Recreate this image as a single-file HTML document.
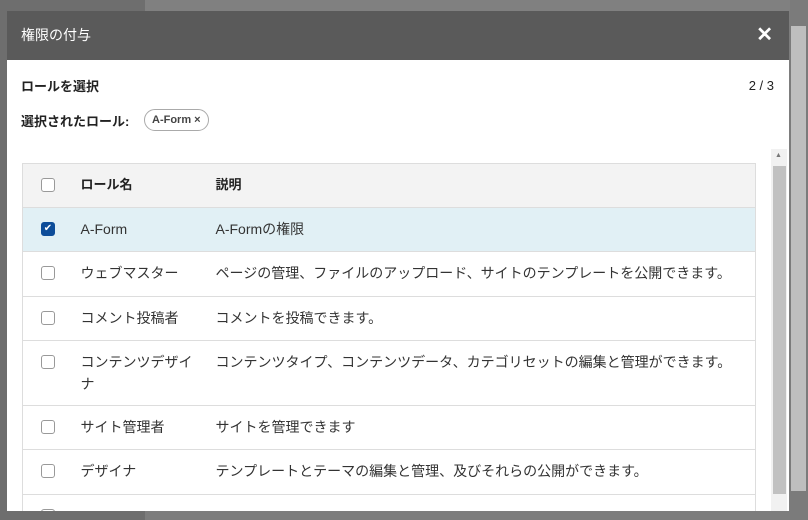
<!DOCTYPE html><html><head><style>
*{margin:0;padding:0;box-sizing:border-box}
body{width:808px;height:520px;overflow:hidden;background:#7d7d7d;font-family:"Liberation Sans","Noto Sans CJK JP",sans-serif;position:relative;color:#333}
.bg1{position:absolute;left:0;top:0;width:145px;height:520px;background:#6e6e6e}
.bg2{position:absolute;left:145px;top:0;width:645px;height:11px;background:#808080}
.dlg{position:absolute;left:7px;top:11px;width:782px;height:500px;background:#fff;overflow:hidden}
.hd{height:49px;background:#5a5a5a;color:#fff;font-size:14px;line-height:49px;padding-left:14px;position:relative}
.x{position:absolute;right:16px;top:0;font-size:20px;font-weight:bold}
.t1{position:absolute;left:14px;top:65px;font-size:13px;font-weight:bold;color:#222}
.pg{position:absolute;right:15px;top:67px;font-size:13px;color:#222}
.t2{position:absolute;left:14px;top:100px;font-size:13px;font-weight:bold;color:#222}
.chip{position:absolute;left:137px;top:98px;height:22px;border:1px solid #aaa;border-radius:11px;padding:0 7px;font-size:11px;line-height:20px;font-weight:bold;color:#444}
table{position:absolute;left:15px;top:152px;width:734px;border-collapse:collapse;border:1px solid #ddd;font-size:14px}
td{border-top:1px solid #ddd;vertical-align:top;padding-top:10px;line-height:22px;color:#333}
td.c{width:58px;padding-left:18px}
td.n{width:135px;padding-right:14px}
tr.h td{background:#f3f3f3;font-weight:bold;color:#222;height:44px;border-top:none;font-size:13px}
tr.s td{background:#e1f0f5}
.cb{width:14px;height:14px;border:1px solid #999;border-radius:3px;background:#fff;margin-top:4px}
.cb.on{background:#0d4d99;border-color:#0d4d99;color:#fff;font-size:10px;line-height:12px;text-align:center}
.sb{position:absolute;left:764px;top:138px;width:16px;height:362px;background:#f1f1f1}
.th{position:absolute;left:2px;top:17px;width:13px;height:328px;background:#c1c1c1}
.ar{position:absolute;left:4px;top:3px;font-size:7px;color:#777}
.ps{position:absolute;left:790px;top:0;width:18px;height:520px;background:#7b7b7b}
.pt{position:absolute;left:1px;top:26px;width:15px;height:465px;background:#bebebe}
</style></head><body>
<div class="bg1"></div><div class="bg2"></div>
<div class="dlg">
<div class="hd">権限の付与<span class="x">✕</span></div>
<div class="t1">ロールを選択</div><div class="pg">2 / 3</div>
<div class="t2">選択されたロール:</div><div class="chip">A-Form ×</div>
<table>
<tr class="h"><td class="c"><div class="cb"></div></td><td class="n">ロール名</td><td>説明</td></tr>
<tr class="s" style="height:44px"><td class="c"><div class="cb on">✔</div></td><td class="n">A-Form</td><td>A-Formの権限</td></tr>
<tr style="height:45px"><td class="c"><div class="cb"></div></td><td class="n">ウェブマスター</td><td>ページの管理、ファイルのアップロード、サイトのテンプレートを公開できます。</td></tr>
<tr style="height:44px"><td class="c"><div class="cb"></div></td><td class="n">コメント投稿者</td><td>コメントを投稿できます。</td></tr>
<tr style="height:65px"><td class="c"><div class="cb"></div></td><td class="n">コンテンツデザイナ</td><td>コンテンツタイプ、コンテンツデータ、カテゴリセットの編集と管理ができます。</td></tr>
<tr style="height:44px"><td class="c"><div class="cb"></div></td><td class="n">サイト管理者</td><td>サイトを管理できます</td></tr>
<tr style="height:45px"><td class="c"><div class="cb"></div></td><td class="n">デザイナ</td><td>テンプレートとテーマの編集と管理、及びそれらの公開ができます。</td></tr>
<tr style="height:44px"><td class="c"><div class="cb"></div></td><td class="n"></td><td></td></tr>
</table>
<div class="sb"><div class="ar">▲</div><div class="th"></div></div>
</div>
<div class="ps"><div class="pt"></div></div>
</body></html>
